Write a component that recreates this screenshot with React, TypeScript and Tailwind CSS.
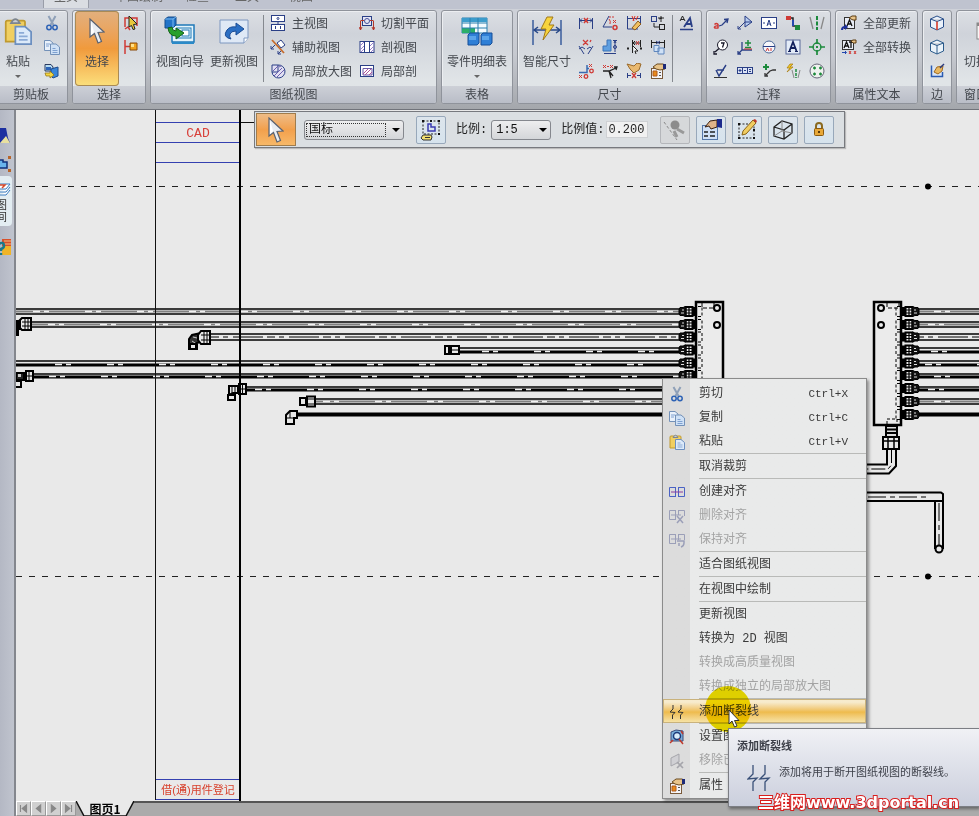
import { Fragment, type ReactNode } from "react";
import clsx from "clsx";

const NAVY = "#2a3f86";
const RED = "#cf3a36";
const GREEN = "#1c8a3c";

/* 16x16 command icons, keyed by command */
const ICONS: Record<string, ReactNode> = {
  cut: (
    <g strokeWidth="1.5">
      <path d="M4.5 1 L9.5 10 M11.5 1 L6.5 10" stroke="#8fa0b8" strokeWidth="2" />
      <circle cx="5" cy="12.5" r="2.2" stroke="#2d62b5" />
      <circle cx="11" cy="12.5" r="2.2" stroke="#2d62b5" />
    </g>
  ),
  copy: (
    <g stroke="#7391b8">
      <path d="M.5 1.5 H6 L9 4 V11.5 H.5Z" fill="#e9f1fb" />
      <path d="M6.5 5 H12 L15.5 8 V15.5 H6.5Z" fill="#cfe1f6" />
      <path d="M2 5h4M2 7h3M8.5 9.5h3M8.5 11.5h5M8.5 13.5h5" stroke="#7ea0d0" />
    </g>
  ),
  paste: (
    <g>
      <path d="M1 3 Q1 2 2 2 H11 Q12 2 12 3 V14 H1Z" fill="#f0cf62" stroke="#c09a30" />
      <path d="M4 3.5 Q6.5 -1 9 3.5Z" fill="#c9ced6" stroke="#7d858f" />
      <path d="M6.5 5.5 H12 L15.5 8.5 V15.5 H6.5Z" fill="#dceafa" stroke="#6c8fc0" />
      <path d="M8.5 9h3M8.5 11h5M8.5 13h5" stroke="#8cabd6" />
    </g>
  ),
  embed: (
    <g>
      <path d="M1 1.5H7L9 4V8H1Z" fill="#b7dcf2" stroke="#2a3a60" />
      <path d="M2 4h5v3H2z" fill="#2b63b8" stroke="none" />
      <path d="M7 6 L14 4 V13 L9 15 L7 13Z" fill="#3a86d8" stroke="#1d4b8c" />
      <path d="M1 10h5V8l4 4-4 3v-2H2z" fill="#f4d640" stroke="#8a6d10" strokeWidth=".7" />
    </g>
  ),
  selectBox: (
    <g>
      <path d="M2 12V3H14V11M2 14l3-2 2 3" stroke={RED} strokeWidth="1.5" />
      <path d="M6 1 L14 9 L10.5 9.5 L12 14 L10 14.5 L8.5 10.5 L6 12Z" fill="#e8c83a" stroke="#222" />
    </g>
  ),
  selectTree: (
    <g>
      <path d="M2 1V15M2 7.5H7" stroke={RED} strokeWidth="1.5" />
      <path d="M7 4h7v7H7z" fill="#f0a21c" stroke="#8a4a0a" />
      <path d="M8 5h3v3H8z" fill="#ffe08a" stroke="none" />
    </g>
  ),
  mainView: (
    <g stroke={NAVY}>
      <rect x="1.5" y=".5" width="13" height="6" fill="#fff" />
      <rect x="1.5" y="9.5" width="13" height="6" fill="#fff" />
      <circle cx="8" cy="3.5" r="1" />
      <path d="M5.5 11v3M10.5 11v3M8 7v2" />
    </g>
  ),
  auxView: (
    <g>
      <path d="M7 4 L11 1 L15 6 L11 9Z" fill="#fff" stroke={NAVY} />
      <path d="M2 1 L14 14" stroke="#c66a2a" strokeWidth="1.8" />
      <path d="M5 6 L1 10 M1 7v3h3M11 12 L8 15M8 12v3h3" stroke={NAVY} />
    </g>
  ),
  detail: (
    <g stroke={NAVY}>
      <path d="M2 2H8A6.500 6.500 0 1 1 2 9Z" fill="#e2e0f2" />
      <path d="M8 2V9H2" />
      <path d="M4 13L12 5M7 14L14 7M3 8L8 3M9 4l2-1" stroke="#6b5fb0" />
    </g>
  ),
  cutPlane: (
    <g>
      <rect x="3.5" y="1.5" width="9" height="9" stroke={NAVY} fill="#e6e6f4" />
      <circle cx="8" cy="6" r="2.5" stroke="#44509a" />
      <path d="M1.5 15V6M14.5 15V6M1.5 5.5H5M11 5.5H14.5M0 12l1.5 3L3 12M13 12l1.5 3L16 12" stroke="#b3362a" />
    </g>
  ),
  section: (
    <g stroke={NAVY}>
      <rect x="1" y="2.5" width="14" height="11" fill="#fff" />
      <path d="M5.5 3v10M10.5 3v10" />
      <path d="M1 7l4-4M1 11l4-4M2 13l3-3M11 7l4-4M11 11l4-4M12 13l3-3" stroke="#9a80cc" />
    </g>
  ),
  broken: (
    <g>
      <rect x="1.5" y="2.5" width="13" height="11" stroke={NAVY} fill="#fff" />
      <path d="M4 5.500H13V12H4Z" stroke="#6a5aa8" />
      <path d="M4 11l5-5M6 12l6-6M10 12l3-3" stroke="#b0569a" />
    </g>
  ),
  dimSpan: (
    <g>
      <path d="M1.5 3V14M14.5 3V14M2 5.5H14" stroke={NAVY} />
      <path d="M4 3.5L2 5.5l2 2M12 3.5l2 2-2 2" stroke={NAVY} />
      <path d="M6 3l4 5M10 3L6 8" stroke={RED} strokeWidth="1.5" />
    </g>
  ),
  dimAngle: (
    <g>
      <path d="M7 1 L1 12H10" stroke={NAVY} />
      <path d="M7 4Q9 6 8 9" stroke={RED} />
      <path d="M11 5l3 3M14 5l-3 3M8 1v2M11 1v2" stroke={RED} />
      <circle cx="13" cy="12.5" r="2" stroke={RED} strokeWidth="1.5" />
    </g>
  ),
  dimEdit: (
    <g>
      <path d="M1.5 1V14H12M14.5 1V10M2 3.5H14" stroke={NAVY} />
      <path d="M6 1l2 5M9 1l-2 5M12 1l-2 4" stroke="#e03020" />
      <path d="M6 13 L12 6 L15 9 L9 15Z" fill="#f0c060" stroke="#8a5a20" />
    </g>
  ),
  dimLink: (
    <g>
      <rect x="1.5" y="1.5" width="5" height="5" stroke={NAVY} />
      <rect x="9.5" y="9.5" width="5" height="5" stroke="#222" />
      <path d="M8 3h6M11 1v6M4 8v4h5M9 4l3-1" stroke="#222" />
    </g>
  ),
  textStyle: (
    <g>
      <path d="M1 6 L3.5 1 L6 6M2 4.5h3" stroke="#222" />
      <path d="M5 12 L11 3 L13 12M7.5 9h5" stroke={NAVY} strokeWidth="1.8" />
      <path d="M1 14.5H14" stroke={NAVY} strokeWidth="1.5" />
    </g>
  ),
  dimBetween: (
    <g>
      <path d="M5 1l5 5M10 1L5 6M13 1l-1 2" stroke={RED} strokeWidth="1.3" />
      <path d="M1 7l5 8M15 7l-5 8M1 10l3-2 3 2M9 10l3-2 2 2" stroke={NAVY} />
    </g>
  ),
  dimCorner: (
    <g>
      <path d="M5 1H9V8H9V12H1V7H5Z" fill="#5f9fe0" stroke="#3a72b8" />
      <path d="M11 1.5h4M13 2v11M12 4l1-2 1 2M2 14.5h12" stroke={NAVY} />
      <circle cx="13" cy="8" r="1.5" stroke={NAVY} />
    </g>
  ),
  dimPick: (
    <g>
      <path d="M6.5 1V14M14.5 1V8M7 4H14M9 2L7 4l2 2" stroke="#222" />
      <path d="M10 2l3 4M13 2l-3 4" stroke={RED} />
      <path d="M7 7l5 5H9l1 3" fill="#fff" stroke="#222" />
      <path d="M1 9.5h2M14 9.5h2" stroke="#222" strokeWidth="2" />
    </g>
  ),
  dimCopy: (
    <g>
      <path d="M1.5 1V9M14.5 1V9M2 3.5H14" stroke="#222" />
      <path d="M6 2l4 3M10 2L6 5" stroke={NAVY} />
      <path d="M4 6.500h5v6H4zM8 9h6v6H8z" fill="#cfe1f6" stroke="#5e86bd" />
    </g>
  ),
  dimOrdinate: (
    <g>
      <path d="M1 9.5H9V2M9 5.5H11" stroke="#3a6ab0" strokeWidth="1.5" />
      <path d="M11 1l3 3M14 1l-3 3M1 12l3 3M4 12l-3 3" stroke={RED} />
      <circle cx="13.5" cy="8" r="1.8" stroke={RED} strokeWidth="1.3" />
      <circle cx="8" cy="13.5" r="1.8" stroke={RED} strokeWidth="1.3" />
    </g>
  ),
  dimBranch: (
    <g>
      <path d="M1 2l3 3M4 2L1 5M8 2l3 3M11 2L8 5M5 3.5h2" stroke={RED} />
      <path d="M1 8H7L14 5M7 8l2 7M7 8l4 5M12 4l3 0-1 3" stroke="#222" strokeWidth="1.3" />
    </g>
  ),
  dimHand: (
    <g>
      <path d="M1 1l3 5 4 4 5-3 2-6-4-1-3 3Z" fill="#e9b970" stroke="#9a6a2c" />
      <path d="M1.5 10V15M14.5 10V15M2 12.5H5M11 12.5H14" stroke={NAVY} />
      <path d="M6 10l4 5M10 10l-4 5" stroke={RED} strokeWidth="1.3" />
    </g>
  ),
  properties: (
    <g>
      <rect x="1.5" y="5.5" width="11" height="10" fill="#f4f4f8" stroke="#7a5a3a" />
      <path d="M3 8h4v5H3z" fill="#e88a1c" stroke="#b05a1a" />
      <path d="M9 9.500h2M9 12.500h2" stroke="#555" />
      <path d="M3 4l4-3h6l2 1v4l-5 1-4-1Z" fill="#e8c48a" stroke="#6a4a20" />
      <path d="M13 1h3v5h-3z" fill="#1d2a78" stroke="none" />
    </g>
  ),
  callout: (
    <g>
      <path d="M1.5 9.5q2-2 3.5 0v4M5 11q-3-.5-3.5 1t3.5 1" stroke={RED} strokeWidth="1.5" />
      <path d="M6 11 L9 10 L14 5M11 4.5l4-.5-1 4" stroke={NAVY} strokeWidth="1.3" />
    </g>
  ),
  leader: (
    <g stroke={NAVY}>
      <path d="M8 1V12L15 7Z" fill="#b8cdf0" />
      <path d="M1 14L8 7H15M1 11v3h3" />
    </g>
  ),
  charFrame: (
    <g stroke={NAVY}>
      <rect x=".5" y="2.5" width="15" height="11" fill="#fff" />
      <path d="M6 11l2-6 2 6M6.5 9h3M2 8h2M12 8h2" />
    </g>
  ),
  connector: (
    <g>
      <path d="M4 3H8V11H12" stroke="#222" strokeWidth="1.5" />
      <rect x="1" y="1" width="5" height="4" fill={RED} stroke="none" />
      <rect x="10" y="10" width="5" height="5" fill={GREEN} stroke="none" />
      <path d="M8 5v6" stroke="#2449b0" strokeWidth="2" />
    </g>
  ),
  centerLine: (
    <g>
      <path d="M1 2L4 14M15 2L12 14" stroke="#888" strokeWidth="1.3" />
      <path d="M8 1V15" stroke={GREEN} strokeWidth="2" strokeDasharray="4 1.5" />
    </g>
  ),
  balloon: (
    <g stroke="#1a1a2a">
      <circle cx="9.5" cy="6" r="5" fill="#fff" />
      <path d="M8 4h3L9.5 8.5M6 9.5L2 13M1 12v3h3" strokeWidth="1.3" />
    </g>
  ),
  weld: (
    <g>
      <path d="M5 3V11H15M5 11L1 15M1 12v3h3" stroke={NAVY} strokeWidth="1.3" />
      <path d="M11 1v6M8 4h6M8 8.5h6" stroke={GREEN} strokeWidth="1.5" />
      <path d="M7 10h8" stroke={RED} />
    </g>
  ),
  datum: (
    <g>
      <circle cx="8" cy="8" r="6" stroke="#4d6a9a" fill="#f6f6fa" />
      <path d="M2 7.5H14" stroke={NAVY} />
      <path d="M5 12l1.5-3L8 12M10 9v3" stroke={RED} />
    </g>
  ),
  text: (
    <g>
      <rect x="1" y="1" width="14" height="14" fill="#e4ecf8" stroke="#5a6a9a" />
      <path d="M4.500 12 L8 3 L11.500 12M5.5 9h5" stroke="#12205c" strokeWidth="1.8" />
      <path d="M3 12.5h3M10 12.5h3" stroke="#12205c" />
    </g>
  ),
  centerMark: (
    <g stroke={GREEN}>
      <circle cx="8" cy="8" r="4" strokeWidth="1.3" />
      <path d="M8 0V5M8 11V16M0 8H5M11 8H16M7 8h2M8 7v2" strokeWidth="1.7" />
    </g>
  ),
  surface: (
    <g stroke={NAVY}>
      <path d="M3 7L6 13L13 2M4 7H11" strokeWidth="1.4" />
      <path d="M1 14.5H14" stroke="#333" />
    </g>
  ),
  gdt: (
    <g stroke={NAVY}>
      <rect x=".5" y="4.5" width="15" height="6" fill="#dce4f6" />
      <path d="M5.5 5v5M10.5 5v5M3 6v3M1.5 7.5h3M7 7.5h2M12 6.5h2M12 8.5h2" />
    </g>
  ),
  edgeCond: (
    <g>
      <path d="M2 4h6M5 1v6" stroke={GREEN} strokeWidth="2" />
      <path d="M5 12 L9 8 L12 7H15M4 10v3h3" stroke="#333" strokeWidth="1.3" />
    </g>
  ),
  autoCenter: (
    <g>
      <path d="M5 1L2 5H5L2 9 8 4H5L8 1Z" fill="#f0c828" stroke="#a87a10" strokeWidth=".7" />
      <path d="M7 7l2 8M15 7l-2 8" stroke="#888" />
      <path d="M11 6v9" stroke={GREEN} strokeWidth="1.5" strokeDasharray="3 1" />
    </g>
  ),
  boltCircle: (
    <g>
      <circle cx="8" cy="8" r="7" stroke="#667" fill="#eef2ee" />
      <path d="M4 5h3M5.5 3.5v3M10 5h3M11.5 3.5v3M4 11h3M5.5 9.5v3M10 11h3M11.5 9.5v3" stroke={GREEN} strokeWidth="1.3" />
    </g>
  ),
  updateAll: (
    <g>
      <rect x="3.5" y="2.5" width="10" height="11" fill="#e9edf6" stroke="#333" />
      <path d="M6 11l2.5-6L11 11M7 9h3" stroke="#111" strokeWidth="1.3" />
      <path d="M8 3l3-2h4v4h-3Z" fill="#e8c48a" stroke="#5a3a10" />
      <path d="M0 15q0-4 4-4V9l3 3-3 3v-2q-2 0-2 2Z" fill="#1c2f9c" stroke="none" />
    </g>
  ),
  convertAll: (
    <g>
      <rect x="1.5" y="1.5" width="11" height="9" fill="#e9edf6" stroke="#333" />
      <path d="M3 9l2.5-6L8 9M4 7h3M8 3h4M10 3v6" stroke="#111" strokeWidth="1.3" />
      <path d="M10 2l2-1h3v3h-3Z" fill="#e8c48a" stroke="#5a3a10" />
      <path d="M1 13.5h4M4 12l1.5 1.5L4 15" stroke="#2449b0" />
      <path d="M8 12l2 3M10 12l-2 3M13 12l2 3M15 12l-2 3" stroke={RED} />
    </g>
  ),
  cubeRed: (
    <g stroke="#2a4f8a">
      <path d="M1.5 4L8 1L14.5 4V12L8 15L1.5 12ZM1.5 4L8 6.5L14.5 4" fill="#eaf1fa" />
      <path d="M8 6.5V15" stroke="#d83a2a" strokeWidth="1.6" />
    </g>
  ),
  cube: (
    <g stroke="#2a5a8a">
      <path d="M1.5 4L8 1L14.5 4V12L8 15L1.5 12ZM1.5 4L8 6.5L14.5 4M8 6.5V15" fill="#eaf3fa" />
    </g>
  ),
  edgePaint: (
    <g>
      <path d="M2.5 2.5V13.5H13.500V9" stroke="#2a5ab0" strokeWidth="1.5" fill="#d9e6f8" />
      <path d="M5 9l3-5 6-1-1 5-4 3Z" fill="#e8b860" stroke="#a06a20" />
      <path d="M11 5l4-4" stroke="#2a3a80" strokeWidth="1.5" />
    </g>
  ),
  align: (
    <g stroke="#4a62c4">
      <path d="M6 3.5H.5V12.5H6M10 3.5H15.5V12.5H10M6.5 3v10M9.5 3v10" />
      <path d="M2 8H14" stroke="#8a3aa0" />
    </g>
  ),
  alignDelete: (
    <g stroke="#9b9fb8">
      <path d="M6 2.5H.5V11.5H6M9 2.5H15.5V8M6.5 2v10M9.5 2v5M2 7h10" />
      <path d="M8 8l6 7M14 8l-6 7" strokeWidth="1.5" />
    </g>
  ),
  alignKeep: (
    <g stroke="#9b9fb8">
      <path d="M6 2.5H.5V11.5H6M9 2.5H15.5V8M6.5 2v10M9.5 2v6M2 7h10" />
      <path d="M8 9h7v2q0 3-3 4M10 11v3" strokeWidth="1.5" />
    </g>
  ),
  breakLine: (
    <g stroke="#333">
      <path d="M4 1V5L1 8L6 8.5L3.5 11V15M12 1V5L9 8L14 8.5L11.5 11V15" />
    </g>
  ),
  setView: (
    <g>
      <path d="M2 3l5-2 7 1v10H2Z" fill="#7ab0dc" stroke="#3a4a7a" />
      <circle cx="8" cy="7" r="3.5" fill="#d8ecfa" stroke="#1d3a7a" strokeWidth="1.5" />
      <path d="M1 14l3-3M14 15l-4-5M12 2l2 3" stroke="#c0392b" strokeWidth="1.5" />
    </g>
  ),
  removeCut: (
    <g stroke="#a5a5ab">
      <path d="M2 5l8-4v8l-8 4Z" fill="#d0d0d4" />
      <path d="M8 9l6 6M14 9l-6 6" strokeWidth="1.7" />
    </g>
  ),
};

function Icon({ name, className = "size-4" }: { name: string; className?: string }) {
  return (
    <svg viewBox="0 0 16 16" className={clsx("shrink-0", className)} fill="none" aria-hidden>
      {ICONS[name]}
    </svg>
  );
}

function PointerIcon({ className }: { className: string }) {
  return (
    <svg viewBox="0 0 16 26" className={className} aria-hidden>
      <path d="M1 1V19L5.5 15.5L9 25L12.5 23.5L9 14.5L15 14Z" fill="#e9edf2" stroke="#5a6270" strokeWidth="1.2" />
      <path d="M2 3V17L5 14Z" fill="#fff" />
    </svg>
  );
}

function IconButton({ name, label }: { name: string; label: string }) {
  return (
    <button aria-label={label} className="flex size-6 items-center justify-center">
      <Icon name={name} />
    </button>
  );
}

function LabelButton({ name, label }: { name: string; label: string }) {
  return (
    <button className="flex h-6 items-center whitespace-nowrap">
      <span className="flex w-6 justify-center"><Icon name={name} /></span>
      <span className="pl-0.5">{label}</span>
    </button>
  );
}

function BigButton({ label, drop, active, className, children }: {
  label: string; drop?: boolean; active?: boolean; className?: string; children: ReactNode;
}) {
  return (
    <button
      className={clsx(
        "flex h-[75px] flex-col items-center whitespace-nowrap rounded-sm",
        active && "bg-linear-to-b from-[#e2b07e] via-[#f09a3c] to-[#fbe07c] shadow-[inset_0_0_0_1px_#a98a55]",
        className,
      )}
    >
      <span className="flex h-10 items-center">{children}</span>
      <span className="leading-5">{label}</span>
      {drop && <span className="mt-1 border-x-3 border-t-3 border-x-transparent border-t-[#666]" />}
    </button>
  );
}

function Group({ title, className, children }: { title: string; className: string; children: ReactNode }) {
  return (
    <section
      className={clsx(
        "flex shrink-0 flex-col overflow-hidden rounded-[3px] border border-[#8f939b] bg-linear-to-b from-[#dcdfe4] from-0% via-[#cfd3da] via-25% to-[#e0e4e7] to-75% shadow-[inset_1px_1px_0_#eceef1]",
        className,
      )}
    >
      <div className="flex h-[75px] px-px">{children}</div>
      <h2 className="h-[17px] bg-linear-to-b from-[#cdd0d7] to-[#b9bdc7] text-center leading-4 whitespace-nowrap">{title}</h2>
    </section>
  );
}

const Divider = () => <span className="mx-0.5 my-1 w-px shrink-0 bg-[#85898f]" />;

const DIM_TOOLS = [
  ["dimSpan", "间距"], ["dimAngle", "角度"], ["dimEdit", "编辑尺寸"], ["dimLink", "链接"],
  ["dimBetween", "夹角"], ["dimCorner", "坐标尺寸"], ["dimPick", "选取尺寸"], ["dimCopy", "复制尺寸"],
  ["dimOrdinate", "基准尺寸"], ["dimBranch", "引出"], ["dimHand", "移动尺寸"], ["properties", "尺寸属性"],
];

const NOTE_TOOLS = [
  ["callout", "标注"], ["leader", "指引线"], ["charFrame", "基准框"], ["connector", "连接器"], ["centerLine", "中心线"],
  ["balloon", "符号标注"], ["weld", "焊接符号"], ["datum", "基准目标"], ["text", "文本"], ["centerMark", "中心标记"],
  ["surface", "表面纹理"], ["gdt", "特征控制框"], ["edgeCond", "边条件"], ["autoCenter", "自动中心线"], ["boltCircle", "螺栓孔圆"],
];

function Ribbon() {
  return (
    <header className="shrink-0 border-b border-[#70737a] bg-linear-to-b from-[#d0d3da] via-[#c6c9d0] to-[#a4a7ac]">
      <nav className="flex h-[9px] overflow-hidden bg-[#bfc3cf] text-xs text-[#666]">
        <button className="-mt-4 ml-[43px] h-6 w-[46px] border-x border-[#999da8] bg-[#dadde2] leading-4">主页</button>
        <button className="-mt-4 ml-[26px] h-6 leading-4">草图绘制</button>
        <button className="-mt-4 ml-[22px] h-6 leading-4">检查</button>
        <button className="-mt-4 ml-[26px] h-6 leading-4">工具</button>
        <button className="-mt-4 ml-[30px] h-6 leading-4">视图</button>
      </nav>
      <div className="flex gap-1 overflow-hidden pt-px pb-[5px] text-xs text-[#44484e]">
        <Group title="剪贴板" className="-ml-1.5 w-[74px]">
          <BigButton label="粘贴" drop className="ml-1 w-9">
            <Icon name="paste" className="size-7" />
          </BigButton>
          <div className="ml-1">
            <IconButton name="cut" label="剪切" />
            <IconButton name="copy" label="复制" />
            <IconButton name="embed" label="选择性粘贴" />
          </div>
        </Group>
        <Group title="选择" className="w-[74px]">
          <BigButton label="选择" active className="ml-px w-11">
            <PointerIcon className="h-[26px] w-4" />
          </BigButton>
          <div>
            <IconButton name="selectBox" label="框选" />
            <IconButton name="selectTree" label="选择过滤器" />
          </div>
        </Group>
        <Group title="图纸视图" className="w-[287px]">
          <BigButton label="视图向导" className="ml-px w-[54px]">
            <svg viewBox="0 0 32 30" className="h-[30px] w-8" fill="none" aria-hidden>
              <rect x="8" y="9" width="22" height="17" fill="#e4f4fb" stroke="#1f78b8" strokeWidth="1.5" />
              <rect x="13" y="12" width="14" height="10" stroke="#1f78b8" />
              <rect x="18" y="14" width="7" height="6" fill="#fff" stroke="#1f78b8" />
              <path d="M8 26h22v2H8z" fill="#2a8ac8" />
              <path d="M1 3L4 1H12V9L9 12H1Z" fill="#2274c8" stroke="#154a8a" />
              <path d="M1 3H9V12M9 3L12 1" stroke="#7ab8ee" />
              <path d="M4 12q1 8 8 8v3l8-6-8-5v3q-4 0-4-4Z" fill="#27a02c" stroke="#146018" />
            </svg>
          </BigButton>
          <BigButton label="更新视图" className="w-[54px]">
            <svg viewBox="0 0 30 26" className="h-[26px] w-[30px]" fill="none" aria-hidden>
              <path d="M1 2H29V20L25 25H1Z" fill="#dfe9f6" stroke="#7d97c0" />
              <path d="M29 20H25V25" fill="#fff" stroke="#7d97c0" />
              <path d="M12 21Q3 19 8 12Q11 8 17 9V5L25 11L17 17V13Q12 13 11 16Q10 19 12 21Z" fill="#2b6fc4" stroke="#1b4c94" />
            </svg>
          </BigButton>
          <Divider />
          <div className="w-[89px]">
            <LabelButton name="mainView" label="主视图" />
            <LabelButton name="auxView" label="辅助视图" />
            <LabelButton name="detail" label="局部放大图" />
          </div>
          <div>
            <LabelButton name="cutPlane" label="切割平面" />
            <LabelButton name="section" label="剖视图" />
            <LabelButton name="broken" label="局部剖" />
          </div>
        </Group>
        <Group title="表格" className="w-[72px]">
          <BigButton label="零件明细表" drop className="w-full">
            <svg viewBox="0 0 32 30" className="h-[30px] w-8" aria-hidden>
              <path d="M1 2H26V17H1Z" fill="#f4fbff" stroke="#2a7fae" />
              <path d="M1 2H26V6H1Z" fill="#3c9ccc" />
              <path d="M1 12H14V17H1Z" fill="#2bae6a" />
              <path d="M9 2V17M17 2V17M1 7H26M1 12H26" stroke="#2a7fae" />
              <path d="M7 19L9 17H18V27L16 29H7ZM20 19L22 17H31V27L29 29H20Z" fill="#2f7fd6" stroke="#174f98" />
              <path d="M8 20h7v4H8zM21 20h7v4h-7z" fill="#5aa4ea" />
            </svg>
          </BigButton>
        </Group>
        <Group title="尺寸" className="w-[185px]">
          <BigButton label="智能尺寸" className="ml-px w-[54px]">
            <svg viewBox="0 0 32 30" className="h-[30px] w-8" aria-hidden>
              <path d="M2 4V29M30 4V29" stroke="#3a5c9c" strokeWidth="1.5" />
              <path d="M3 14H29M7 11L3 14L7 17M25 11L29 14L25 17" fill="none" stroke="#2a4a8a" strokeWidth="1.5" />
              <path d="M16 1L10 13H15L12 24L23 9H18L22 1Z" fill="#f8d43c" stroke="#a07818" />
            </svg>
          </BigButton>
          <div className="grid grid-cols-4 content-start">
            {DIM_TOOLS.map(([name, label]) => <IconButton key={name} name={name} label={label} />)}
          </div>
          <Divider />
          <IconButton name="textStyle" label="样式" />
        </Group>
        <Group title="注释" className="w-[125px]">
          <div className="ml-px grid grid-cols-5 content-start">
            {NOTE_TOOLS.map(([name, label]) => <IconButton key={name} name={name} label={label} />)}
          </div>
        </Group>
        <Group title="属性文本" className="w-[83px]">
          <div>
            <LabelButton name="updateAll" label="全部更新" />
            <LabelButton name="convertAll" label="全部转换" />
          </div>
        </Group>
        <Group title="边" className="w-[30px]">
          <div className="ml-px">
            <IconButton name="cubeRed" label="显示边" />
            <IconButton name="cube" label="隐藏边" />
            <IconButton name="edgePaint" label="边画笔" />
          </div>
        </Group>
        <Group title="窗口" className="w-10">
          <BigButton label="切换窗口" className="ml-1 w-[52px] shrink-0">
            <svg viewBox="0 0 32 28" className="h-7 w-8" aria-hidden>
              <rect x="5" y="6" width="22" height="16" fill="#f6f6f6" stroke="#888" />
              <path d="M5 6h22v3H5z" fill="#888" />
            </svg>
          </BigButton>
        </Group>
      </div>
    </header>
  );
}

function Sidebar() {
  return (
    <aside className="flex w-4 shrink-0 flex-col overflow-hidden border-r-2 border-[#84878e] bg-linear-to-r from-[#b4b8c4] to-[#c0c4ce] pt-2.5">
      <button aria-label="特征库" className="h-[31px]">
        <svg viewBox="0 0 14 20" className="h-5 w-3.5" aria-hidden>
          <path d="M0 2H6L8 12L10 17H0Z" fill="#1c2fa0" />
          <path d="M0 17H10L6 10Z" fill="#e8e0a0" />
        </svg>
      </button>
      <button aria-label="零件库" className="h-[25px]">
        <svg viewBox="0 0 14 18" className="h-[18px] w-3.5" aria-hidden>
          <path d="M0 5H3V7H7V13H0" fill="#6ab4ec" stroke="#12307c" strokeWidth="1.5" />
          <path d="M8 1h3v3H8zM8 14h3v3H8z" fill="#b8652a" />
        </svg>
      </button>
      <button className="mr-0.5 flex h-[50px] flex-col items-start overflow-hidden rounded-r-sm bg-[#e3edf2] pt-1 text-[11px] leading-3 text-[#333]">
        <svg viewBox="0 0 12 18" className="h-[18px] w-3 shrink-0" fill="none" aria-hidden>
          <path d="M0 4H10L6 9H0M10 7L6 12H0M10 10L6 15H0" fill="#fff" stroke="#3a7cc0" />
          <path d="M0 5h5L2 8" stroke="#d84a2a" strokeWidth="1.5" />
        </svg>
        <span className="-ml-1">图</span>
        <span className="-ml-1">间</span>
      </button>
      <button aria-label="帮助" className="mt-3">
        <svg viewBox="0 0 12 18" className="h-[18px] w-3" fill="none" aria-hidden>
          <path d="M2 1H11V17H2Z" fill="#f0b428" />
          <path d="M2 1H11V8H2Z" fill="#d8502a" />
          <path d="M4 3h7M4 6h7" stroke="#f4c080" />
          <path d="M-1 6Q4 3 4 8Q4 10 1 11V13M1 15v2" stroke="#1a7a8c" strokeWidth="2.5" />
        </svg>
      </button>
    </aside>
  );
}

type Hose = { y: number; h: number; x: number; kind: "grey" | "open" | "dark" | "solid"; shift: number };

const HOSES: Hose[] = [
  { y: 309, h: 5, x: 16, kind: "grey", shift: 33 },
  { y: 322, h: 5, x: 31, kind: "grey", shift: 48 },
  { y: 334, h: 6, x: 211, kind: "open", shift: 211 },
  { y: 348, h: 4, x: 459, kind: "dark", shift: 482 },
  { y: 361, h: 4, x: 16, kind: "dark", shift: 55 },
  { y: 374, h: 3, x: 33, kind: "dark", shift: 49 },
  { y: 387, h: 3, x: 247, kind: "dark", shift: 255 },
  { y: 399, h: 5, x: 316, kind: "grey", shift: 323 },
  { y: 413, h: 3, x: 297, kind: "solid", shift: 300 },
];

function HoseRun({ hose, from, to, shift }: { hose: Hose; from: number; to: number; shift: number }) {
  const { y, h, kind } = hose;
  if (kind === "solid") return <path d={`M${from} ${y + 1.5}H${to}`} stroke="#000" strokeWidth="4" />;
  const mid = kind === "dark" ? y + h - 0.5 : y + h / 2;
  return (
    <g stroke="#000" strokeWidth="1.5">
      {kind === "grey" && <path d={`M${from} ${mid}H${to}`} stroke="#808080" strokeWidth="2" />}
      {kind === "open" && <path d={`M${from} ${mid}H${to}`} strokeWidth="1" strokeDasharray="8 4 5 5 30 4" />}
      <path d={`M${from} ${y}H${to}`} />
      <path d={`M${from} ${y + h}H${to}`} strokeWidth={kind === "dark" ? 3 : 1.5} />
      {kind !== "open" && (
        <path d={`M${shift} ${mid}H${to}`} stroke="#f2f2f2" strokeDasharray="7 4 5 36" />
      )}
    </g>
  );
}

/* Hose end fitting; drawn from its plate side outwards, so dir -1 mirrors it */
function Fitting({ x, y, dir }: { x: number; y: number; dir: 1 | -1 }) {
  return (
    <g transform={`translate(${x} ${y}) scale(${dir} 1)`} stroke="#000" fill="#e9e9e9">
      <rect x="0" y="-4" width="3" height="8" fill="#000" />
      <rect x="3.5" y="-4.5" width="7" height="9" strokeWidth="2" />
      <path d="M4 -1.5H10M4 1.5H10M7 -4V4" strokeWidth="1.2" />
      <path d="M10 -5L13 -4H16L17 -2V2L16 4H13L10 5Z" fill="#111" />
      <path d="M12 -1.5h2M12 1.5h3" stroke="#ddd" />
      <path d="M-2 -5H-6V5H-2" fill="none" strokeDasharray="3 2" />
    </g>
  );
}

function Plate({ x, holeX, bottom, dashX }: { x: number; holeX: number; bottom: number; dashX: number }) {
  return (
    <g stroke="#000" fill="none">
      <path d={`M${x} 302H${x + 27}V${bottom}H${x}Z`} strokeWidth="2.5" fill="#ebebeb" />
      <circle cx={holeX} cy="308" r="3" strokeWidth="2" />
      <circle cx={holeX} cy="325" r="3" strokeWidth="2" />
      <path d={`M${dashX} 303V308H${dashX + 12}V303`} strokeDasharray="4 2" />
    </g>
  );
}

/* Sheet geometry, in window coordinates shifted to the sheet's origin */
function Drawing() {
  return (
    <svg className="absolute inset-0 size-full" fill="none" role="img" aria-label="图纸">
      <g transform="translate(-16 -110)">
        <path d="M16 186.5H2000M16 576.5H2000" stroke="#222" strokeDasharray="6 7" />
        <circle cx="928" cy="186.5" r="3" fill="#000" />
        <circle cx="928" cy="576.5" r="3" fill="#000" />

        {HOSES.map((h) => <HoseRun key={h.y} hose={h} from={h.x} to={682} shift={h.shift} />)}
        {HOSES.map((h) => <HoseRun key={h.y} hose={h} from={916} to={1400} shift={922 + (h.y % 5) * 3} />)}
        <Plate x={696} holeX={717} bottom={425} dashX={702} />
        <Plate x={874} holeX={881} bottom={425} dashX={887} />
        {HOSES.map((h) => (
          <Fragment key={h.y}>
            <Fitting x={696} y={h.y + h.h / 2} dir={-1} />
            <Fitting x={902} y={h.y + h.h / 2} dir={1} />
          </Fragment>
        ))}

        <g stroke="#000" strokeWidth="2" fill="#e9e9e9">
          <path d="M22 318H31V330H22L19 327V321Z" />
          <path d="M25 318V330M28 318V330M22 322H31M22 326H31" strokeWidth="1" />
          <path d="M16 321h4v8h-4zM15 331h3v4h-3z" fill="#000" />
          <path d="M26 371H33V381H26Z" />
          <path d="M29 371V381M26 376H33" strokeWidth="1" />
          <path d="M16 373h8v7h-8z" fill="#222" />
          <path d="M18 374h3v3h-3z" fill="#ccc" stroke="none" />
          <path d="M15 381H21V387H15Z" />

          <path d="M201 333L192 335L189 339V349H197V343L202 341Z" fill="#333" />
          <path d="M193 337l4 1M192 341l3 2" stroke="#ccc" strokeWidth="1" />
          <path d="M190 344H196V349H190Z" />
          <path d="M201 331H210V344H201L198 340V335Z" />
          <path d="M204 331V344M207 331V344M201 335H210M201 340H210" strokeWidth="1" />
          <path d="M445 346H449V354H445ZM451 346H459V354H451Z" />
          <path d="M451 350H459" strokeWidth="1" />
          <path d="M229 386H238V393H233L229 395Z" />
          <path d="M232 386v7M235 386v7" strokeWidth="1" />
          <path d="M239 384H246V394H239Z" />
          <path d="M242.5 384V394M239 389H246" strokeWidth="1" />
          <path d="M228 395H235V400H228Z" />
          <path d="M300 398H306V405H300ZM307 396.5H315V406.5H307Z" />
          <path d="M307 399H315M307 404H315" strokeWidth="1" />
          <path d="M290 411H297V418H294V424H286V415Z" />
          <path d="M286 418H294M290 411V418" strokeWidth="1" />
        </g>

        <g stroke="#000" strokeWidth="2">
          <path d="M887 424V419H897V424" strokeWidth="1" strokeDasharray="3 2" />
          <path d="M886 426H897V437H886ZM886 429.5H897M886 433H897" fill="#ddd" />
          <path d="M883 437H899V449H883Z" fill="#e9e9e9" />
          <path d="M888 437V449M894 437V449M883 441H899" strokeWidth="1.5" />
          <path d="M887 449V464.5H860M896 449V466L889 473.5H860" />
          <path d="M891.5 449V465L888 469H860" strokeWidth="1" strokeDasharray="14 3 4 3" />
          <path d="M860 492.5H941L943 494V549M860 501H935V549M935 501H943" />
          <path d="M868 497H930M939 503V545" strokeWidth="1" strokeDasharray="18 4 5 4" />
          <circle cx="939" cy="549" r="3.5" />
        </g>

        <path d="M156 122.5H240M156 142.5H240M156 162.5H240M156 779.5H240M156 799.5H240" stroke="#3440b0" />
        <path d="M155.5 110V800M241 122.5H256" stroke="#111" />
        <path d="M240 110V801" stroke="#000" strokeWidth="2" />
        <text x="198" y="137" textAnchor="middle" fill="#d8403a" className="font-['Liberation_Mono',monospace] text-[13px]">CAD</text>
        <text x="198" y="794" textAnchor="middle" fill="#d8402c" className="font-['Liberation_Sans','Noto_Sans_CJK_SC',sans-serif] text-[11px]">借(通)用件登记</text>
      </g>
    </svg>
  );
}

const NAV_GLYPHS = [
  ["首页", "M4 3V11M11 3L6 7L11 11Z"],
  ["上一页", "M10 3L5 7L10 11Z"],
  ["下一页", "M5 3L10 7L5 11Z"],
  ["末页", "M11 3V11M4 3L9 7L4 11Z"],
];

function SheetTabs() {
  return (
    <footer className="flex h-[15px] shrink-0 overflow-hidden bg-[#ababab]">
      <div className="flex bg-[#d0d0d0]">
        {NAV_GLYPHS.map(([label, d]) => (
          <button key={label} aria-label={label} className="h-[15px] w-[15px] border border-[#999] border-t-white border-l-white">
            <svg viewBox="0 0 15 14" className="size-full" aria-hidden>
              <path d={d} fill="#888" stroke="#888" strokeWidth="1.3" />
            </svg>
          </button>
        ))}
      </div>
      <button className="relative h-[15px] w-[58px] text-xs leading-[15px] font-bold text-black">
        <svg viewBox="0 0 58 15" className="absolute inset-0 size-full" aria-hidden>
          <path d="M0 0H58L50 15H8Z" fill="#e9e9e9" />
          <path d="M0 0L8 15H50L58 0" fill="none" stroke="#111" strokeWidth="1.5" />
        </svg>
        <span className="relative">图页1</span>
      </button>
      <span className="grow border-t-2 border-[#555]" />
    </footer>
  );
}

function ToolButton({ label, disabled, children }: { label: string; disabled?: boolean; children: ReactNode }) {
  return (
    <button
      aria-label={label}
      disabled={disabled}
      className={clsx(
        "flex h-7 w-[30px] items-center justify-center rounded-xs border",
        disabled ? "border-[#b4b6ba] bg-[#d6d8da]" : "border-[#98a8ba] bg-linear-to-b from-[#dde5ec] to-[#d6e3ed]",
      )}
    >
      <svg viewBox="0 0 24 24" className="size-6" fill="none" aria-hidden>{children}</svg>
    </button>
  );
}

function Combo({ label, value, focused, className }: { label: string; value: string; focused?: boolean; className: string }) {
  return (
    <div className={clsx("relative", className)}>
      <select
        aria-label={label}
        defaultValue={value}
        className="h-5 w-full appearance-none rounded-[3px] border border-[#85888e] bg-linear-to-b from-[#eeeeef] to-[#d4d6d9] pl-1 text-xs leading-4 text-[#111]"
      >
        <option>{value}</option>
      </select>
      {focused && <span className="pointer-events-none absolute inset-y-[3px] left-0.5 right-[18px] border border-dotted border-[#333]" />}
      <span className="pointer-events-none absolute top-2 right-1 border-x-4 border-t-4 border-x-transparent border-t-black" />
    </div>
  );
}

function ViewToolbar() {
  return (
    <div
      role="toolbar"
      className="absolute top-[111px] left-[254px] flex h-[37px] items-center border border-[#77797e] bg-[#dbdfe2] pr-2.5 pl-px font-['Liberation_Mono','Noto_Sans_CJK_SC',monospace] text-xs text-[#222] shadow-[1px_1px_1px_#0003]"
    >
      <button aria-label="选择" className="flex h-[33px] w-10 items-center justify-center border border-[#a07c4c] bg-linear-to-b from-[#eebc86] via-[#f2a04c] to-[#f7b868]">
        <PointerIcon className="h-[26px] w-4" />
      </button>
      <Combo label="标准" value="国标" focused className="ml-2 w-[100px]" />
      <div className="ml-3">
        <ToolButton label="视图边界">
          <rect x="4" y="3" width="16" height="13" stroke="#222" strokeDasharray="2 1.5" />
          <path d="M3 2h2v2H3zM19 2h2v2h-2zM19 15h2v2h-2zM11 2h2v2h-2z" fill="#111" />
          <path d="M9 6h3v3h4v4H9z" stroke="#3a3ab0" strokeWidth="1.5" />
          <path d="M2 20l2-3h8l1 2-1 3H4z" fill="#f4e070" stroke="#333" />
          <path d="M6 19.5h5" stroke="#333" />
        </ToolButton>
      </div>
      <label className="ml-2.5 flex items-center gap-1">
        比例:
        <Combo label="比例" value="1:5" className="w-[60px]" />
      </label>
      <label className="ml-2.5 flex items-center gap-0.5">
        比例值:
        <input defaultValue="0.200" className="h-[17px] w-[42px] border border-[#cfd1d4] bg-[#f1f1f1] pl-px text-xs" />
      </label>
      <div className="ml-3 flex gap-1.5">
        <ToolButton label="查找" disabled>
          <circle cx="12" cy="7" r="4.5" fill="#8c8c8c" />
          <path d="M14 11l7 4M11 13l3 6" stroke="#999" strokeWidth="3" />
          <path d="M1 4L14 22" stroke="#888" strokeDasharray="3 2" />
        </ToolButton>
        <ToolButton label="视图属性">
          <rect x="3.5" y="7.5" width="15" height="14" fill="#cfe0f6" stroke="#5577a8" />
          <path d="M5 14h4M11 14h5M5 18h4M11 18h5" stroke="#222" strokeWidth="1.5" />
          <path d="M6 9L11 3L18 2V9L12 11L10 8Z" fill="#e0b48a" stroke="#3a2010" />
          <path d="M18 1h5v9l-5-1z" fill="#1d2a8c" />
        </ToolButton>
        <ToolButton label="绘制视图">
          <path d="M4 6H19V20H4Z" stroke="#222" strokeDasharray="2 1.5" />
          <path d="M3 5h2v2H3zM3 19h2v2H3zM18 19h2v2h-2zM18 11h2v2h-2z" fill="#111" />
          <path d="M7 17L8 13L18 2L21 5L11 16Z" fill="#f0cc60" stroke="#8a6418" />
          <path d="M18 2l2-1 2 2-1 2z" fill="#c0392b" />
        </ToolButton>
        <ToolButton label="着色">
          <path d="M3 9L11 3L21 6V15L13 21L3 18ZM3 9L13 12L21 6M13 12V21" stroke="#222" strokeWidth="1.3" />
          <path d="M3 18L11 13L21 15M11 3V13" stroke="#888" />
        </ToolButton>
        <ToolButton label="锁定">
          <path d="M9 11V8q0-3 3-3t3 3v3" stroke="#8a6a20" strokeWidth="2" />
          <rect x="7.5" y="10.5" width="9" height="7" rx="1" fill="#e8a838" stroke="#8a5a10" />
          <path d="M12 13v2" stroke="#5a3808" strokeWidth="2" />
        </ToolButton>
      </div>
    </div>
  );
}

type MenuItem = { label: string; icon?: string; keys?: string; off?: boolean; hot?: boolean };

const MENU: MenuItem[][] = [
  [
    { label: "剪切", icon: "cut", keys: "Ctrl+X" },
    { label: "复制", icon: "copy", keys: "Ctrl+C" },
    { label: "粘贴", icon: "paste", keys: "Ctrl+V" },
  ],
  [{ label: "取消裁剪" }],
  [
    { label: "创建对齐", icon: "align" },
    { label: "删除对齐", icon: "alignDelete", off: true },
    { label: "保持对齐", icon: "alignKeep", off: true },
  ],
  [{ label: "适合图纸视图" }],
  [{ label: "在视图中绘制" }],
  [
    { label: "更新视图" },
    { label: "转换为 2D 视图" },
    { label: "转换成高质量视图", off: true },
    { label: "转换成独立的局部放大图", off: true },
  ],
  [{ label: "添加断裂线", icon: "breakLine", hot: true }],
  [
    { label: "设置图纸视图", icon: "setView" },
    { label: "移除已断裂视图", icon: "removeCut", off: true },
  ],
  [{ label: "属性", icon: "properties" }],
];

function ContextMenu() {
  return (
    <div
      role="menu"
      className="absolute top-[378px] left-[662px] w-[205px] border border-[#8b8b8b] bg-linear-to-r from-[#dcdcdc] from-[27px] to-[#e9eaea] to-[27px] pt-0.5 pb-px font-['Liberation_Mono','Noto_Sans_CJK_SC',monospace] text-xs shadow-[2px_2px_3px_#0006]"
    >
      {MENU.map((section, i) => (
        <Fragment key={i}>
          {i > 0 && <div role="separator" className="ml-9 h-px bg-[#b9bab8]" />}
          {section.map((item) => (
            <button
              key={item.label}
              role="menuitem"
              disabled={item.off}
              className={clsx(
                "flex h-6 w-full items-center border px-px pt-0.5 whitespace-nowrap",
                item.hot
                  ? "border-[#c9b27c] bg-linear-to-b from-[#f7ebcd] from-10% via-[#eebb4c] via-55% to-[#f6e2a4]"
                  : "border-transparent",
                item.off ? "text-[#a3a3a3]" : "text-[#3a3a3a]",
              )}
            >
              <span className="flex w-6 justify-center">{item.icon && <Icon name={item.icon} />}</span>
              <span className="pl-2.5">{item.label}</span>
              {item.keys && <span className="ml-auto pr-4 text-[11px]">{item.keys}</span>}
            </button>
          ))}
        </Fragment>
      ))}
    </div>
  );
}

function Tooltip() {
  return (
    <div
      role="tooltip"
      className="absolute top-[728px] right-0 left-[728px] h-[79px] border border-r-0 border-[#7c7e84] bg-linear-to-b from-[#f0f1f5] to-[#cbcfdd] px-2 pt-2 text-[11px] text-[#3c3f48] shadow-[1px_2px_3px_#0006]"
    >
      <p className="leading-4 font-bold">添加断裂线</p>
      <div className="flex gap-2 pl-2.5">
        <svg viewBox="0 0 24 26" className="mt-3 h-[26px] w-6 shrink-0" fill="none" stroke="#3a5078" strokeWidth="1.3" aria-hidden>
          <path d="M6 0V9L1 14L10 13L6 17V26M18 0V9L13 14L22 13L18 17V26" />
        </svg>
        <p className="mt-2.5 leading-4 whitespace-nowrap">添加将用于断开图纸视图的断裂线。</p>
      </div>
    </div>
  );
}

export default function App() {
  return (
    <div className="relative flex h-screen flex-col overflow-hidden bg-[#b9bdc9] font-['Noto_Sans_CJK_SC',sans-serif]">
      <Ribbon />
      <div className="flex min-h-0 grow">
        <Sidebar />
        <div className="flex min-w-0 grow flex-col">
          <main className="relative grow overflow-hidden bg-[#e9e9e9]">
            <Drawing />
          </main>
          <SheetTabs />
        </div>
      </div>
      <ViewToolbar />
      <ContextMenu />
      <span className="absolute top-[686px] left-[705px] size-[46px] rounded-full bg-[#f3e200] mix-blend-multiply" />
      <Tooltip />
      <svg viewBox="0 0 12 19" className="absolute top-[709px] left-[728px] h-[19px] w-3" aria-hidden>
        <path d="M1 1V15L4 12L6.5 18L9 17L6.5 11.5H11Z" fill="#fff" stroke="#333" />
      </svg>
      <p className="absolute top-[793px] left-[758px] font-['DejaVu_Sans','Noto_Sans_CJK_SC',sans-serif] text-base leading-5 font-bold whitespace-nowrap text-white [-webkit-text-stroke:2px_#d81e1e] [paint-order:stroke]">
        三维网www.3dportal.cn
      </p>
    </div>
  );
}
